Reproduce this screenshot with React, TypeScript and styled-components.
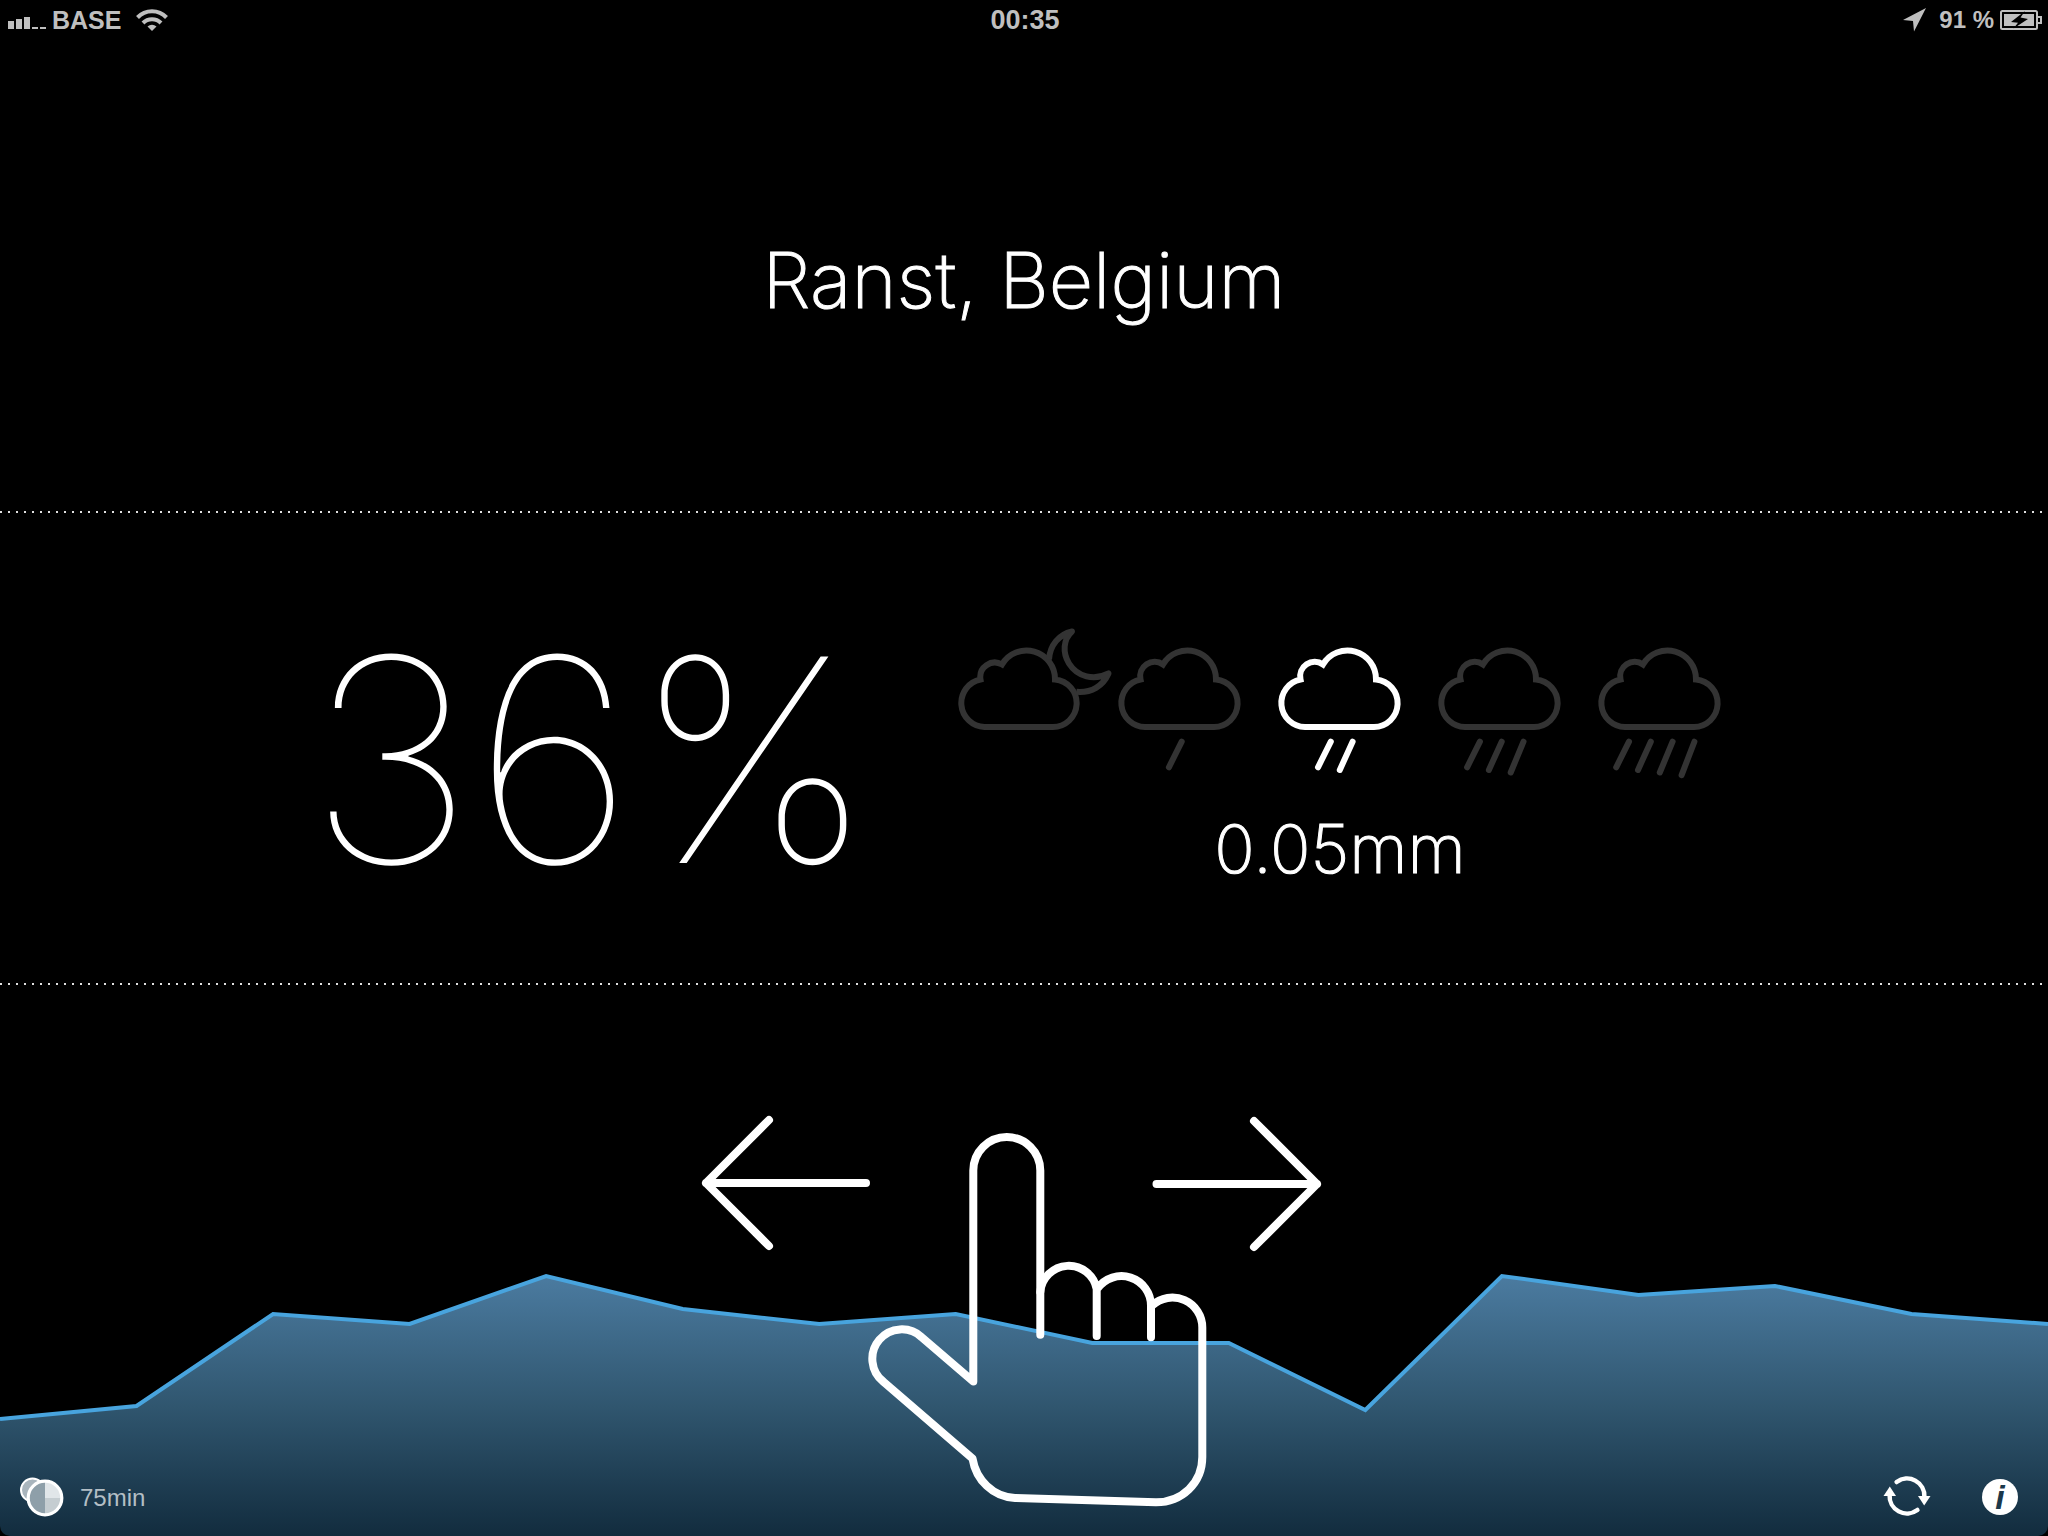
import React from "react";
import styled, { createGlobalStyle } from "styled-components";

const GlobalStyle = createGlobalStyle`
  *, *::before, *::after { box-sizing: border-box; }
  body {
    margin: 0;
    background: #000;
    color: #fff;
    font-family: "Liberation Sans", Arial, sans-serif;
  }
`;

const Screen = styled.div`
  display: grid;
  grid-template-rows: 513fr 472fr 551fr;
  min-height: 100vh;
  overflow: hidden;
  background: #000;
`;

const dotted = `
  background-image: linear-gradient(to right, #e0e0e0 2px, transparent 2px);
  background-size: 8px 2px;
  background-repeat: repeat-x;
  background-position: left bottom;
`;

const Header = styled.header`
  display: flex;
  flex-direction: column;
  ${dotted}
`;

const StatusBar = styled.div`
  display: grid;
  grid-template-columns: 1fr auto 1fr;
  align-items: center;
  height: 40px;
  padding: 0 6px 0 8px;
  color: #bfbfbf;
  font-size: 24px;
  font-weight: 700;
  line-height: 32px;
`;

const StatusGroup = styled.div<{ $end?: boolean }>`
  display: flex;
  align-items: center;
  justify-content: ${(p) => (p.$end ? "flex-end" : "flex-start")};
`;

const Carrier = styled.span`
  padding: 0 14px 0 4px;
  font-size: 25px;
`;

const Clock = styled.time`
  font-size: 27px;
`;

const BatteryLevel = styled.span`
  padding: 0 6px 0 12px;
`;

const Location = styled.h1`
  flex: 1;
  display: flex;
  align-items: center;
  justify-content: center;
  margin: 0;
  padding-top: 6px;
  font-family: Inter, "Liberation Sans", sans-serif;
  font-size: 77px;
  font-weight: 200;
  line-height: 100px;
  -webkit-text-stroke: 1px currentColor;
`;

const Forecast = styled.main`
  display: flex;
  align-items: center;
  justify-content: center;
  gap: 66px;
  ${dotted}
`;

const Chance = styled.div`
  padding-top: 22px;
  font-family: Inter, "Liberation Sans", sans-serif;
  font-size: 284px;
  font-weight: 100;
  line-height: 280px;
`;

const Rain = styled.section`
  display: flex;
  flex-direction: column;
  align-items: center;
  gap: 20px;
`;

const Levels = styled.ul`
  display: flex;
  margin: 0;
  padding: 0;
  list-style: none;
`;

const Level = styled.li<{ $active: boolean }>`
  width: 160px;
  height: 180px;
  color: ${(p) => (p.$active ? "#fff" : "#333")};
`;

const LevelIcon = styled.svg`
  display: block;
  width: 160px;
  height: 180px;
  overflow: visible;
  fill: none;
  stroke: currentColor;
  stroke-width: 6;
`;

const Amount = styled.div`
  font-family: Inter, "Liberation Sans", sans-serif;
  font-size: 67px;
  font-weight: 200;
  line-height: 80px;
  -webkit-text-stroke: 1px currentColor;
`;

const Timeline = styled.section`
  display: grid;
  grid-template: minmax(0, 1fr) / minmax(0, 1fr);
  border-radius: 0 0 10px 10px;
  overflow: hidden;

  > * { grid-area: 1 / 1; }
`;

const Chart = styled.svg`
  display: block;
  width: 100%;
  height: 100%;
  min-height: 0;
`;

const SwipeHint = styled.svg`
  place-self: end center;
  width: 648px;
  height: 424px;
  fill: none;
  stroke: #fff;
  stroke-width: 8;
  stroke-linecap: round;
  stroke-linejoin: round;
`;

const Footer = styled.footer`
  align-self: end;
  display: flex;
  align-items: center;
  justify-content: space-between;
  padding: 0 24px 15px 20px;
`;

const Range = styled.button`
  display: flex;
  align-items: center;
  gap: 16px;
  height: 48px;
  padding: 2px 0 0;
  border: 0;
  background: none;
  color: #b3bec5;
  font: 24px/32px "Liberation Sans", Arial, sans-serif;
`;

const Actions = styled.div`
  display: flex;
  gap: 45px;
`;

const IconButton = styled.button`
  display: grid;
  place-items: center;
  width: 48px;
  height: 48px;
  padding: 0;
  border: 0;
  background: none;
  color: #fff;
`;

const InfoDisc = styled.span`
  width: 36px;
  height: 36px;
  border-radius: 50%;
  background: #fff;
  color: #1b384a;
  font: italic 700 34px/36px "Liberation Sans", Arial, sans-serif;
  text-align: center;
`;

const CLOUD =
  "M45 118A24 24 0 0 1 40.5 70.5A14.5 14.5 0 0 1 63 55.5A28.5 28.5 0 0 1 116 70.5A23.8 23.8 0 0 1 114 118Z";
const CLOUD_NIGHT =
  "M44.5 118A24 24 0 0 1 40.5 70.5A14.5 14.5 0 0 1 62 55.5A28.5 28.5 0 0 1 115 70.5A23.8 23.8 0 0 1 112.5 118Z";

const LEVELS = ["Dry", "Drizzle", "Light rain", "Rain", "Heavy rain"];

function RainLevel({ drops }: { drops: number }) {
  const first = 81.7 - 10.9 * (drops - 1);
  return (
    <LevelIcon viewBox="0 0 160 180" aria-hidden="true">
      <path d={drops === 0 ? CLOUD_NIGHT : CLOUD} />
      {drops === 0 && (
        <path
          strokeLinejoin="round"
          d="M109 50.5C110 36 119 25.5 132 22.5C123 30.5 122.5 44 129 54.5C137.5 68 154 72 168.5 64.5C163 77 151.5 84 136.5 82.8"
        />
      )}
      {Array.from({ length: drops }, (_, i) => {
        const x = first + 21.8 * i;
        return (
          <line key={i} strokeLinecap="round" x1={x} y1={132.7} x2={x - 12.8} y2={158.3 + 2.6 * i} />
        );
      })}
    </LevelIcon>
  );
}

/* One sample every five minutes; distance of the curve from the panel's top. */
const SAMPLES = [434, 421, 329, 339, 291, 324, 339, 329, 358, 358, 425, 291, 310, 301, 329, 339];

function RainChart() {
  const step = 2048 / (SAMPLES.length - 1);
  const points = SAMPLES.map((y, i) => `${(i * step).toFixed(1)},${y}`).join(" ");
  return (
    <Chart viewBox="0 0 2048 551" preserveAspectRatio="none" role="img" aria-label="Rain chart">
      <defs>
        <linearGradient id="fill" gradientUnits="userSpaceOnUse" x1="0" y1="291" x2="0" y2="551">
          <stop offset="0" stopColor="#4b7ba0" />
          <stop offset="0.5" stopColor="#30566f" />
          <stop offset="1" stopColor="#122c3e" />
        </linearGradient>
      </defs>
      <polygon points={`0,551 ${points} 2048,551`} fill="url(#fill)" />
      <polyline
        points={points}
        fill="none"
        stroke="#48a4de"
        strokeWidth="4"
        vectorEffect="non-scaling-stroke"
      />
    </Chart>
  );
}

export default function App() {
  return (
    <>
      <GlobalStyle />
      <Screen>
        <Header>
          <StatusBar>
            <StatusGroup>
              <svg width="40" height="24" viewBox="0 0 40 24" fill="currentColor" aria-hidden="true">
                <path d="M0 13h6v8H0zM8 11h6v10H8zM16 9h6v12h-6zM24 19h6v2h-6zM32 19h6v2h-6z" />
              </svg>
              <Carrier>BASE</Carrier>
              <svg width="34" height="24" viewBox="0 0 34 24" fill="none" stroke="currentColor" aria-hidden="true">
                <path d="M2.5 9.5A20 20 0 0 1 31.5 9.5" strokeWidth="4" />
                <path d="M8 15A12.5 12.5 0 0 1 26 15" strokeWidth="4" />
                <path d="M12.5 18.5A7 7 0 0 1 21.5 18.5L17 23Z" fill="currentColor" stroke="none" />
              </svg>
            </StatusGroup>
            <Clock>00:35</Clock>
            <StatusGroup $end>
              <svg width="24" height="24" viewBox="0 0 24 24" fill="currentColor" aria-hidden="true">
                <path d="M23 0L0 12L10 13L11 23.5Z" />
              </svg>
              <BatteryLevel>91 %</BatteryLevel>
              <svg width="42" height="24" viewBox="0 0 42 24" fill="currentColor" aria-hidden="true">
                <rect x="1" y="3" width="36" height="18" rx="1.5" fill="none" stroke="currentColor" strokeWidth="2" />
                <path d="M38 8h4v8h-4v-2h2v-4h-2z" />
                <rect x="4" y="6" width="30" height="12" />
                <path d="M25 3L11 14L18 14.7L13.5 20.5L28 11L20.5 9.5Z" fill="#000" />
              </svg>
            </StatusGroup>
          </StatusBar>
          <Location>Ranst, Belgium</Location>
        </Header>

        <Forecast>
          <Chance>36%</Chance>
          <Rain>
            <Levels>
              {LEVELS.map((name, drops) => (
                <Level key={name} $active={drops === 2} aria-label={name}>
                  <RainLevel drops={drops} />
                </Level>
              ))}
            </Levels>
            <Amount>0.05mm</Amount>
          </Rain>
        </Forecast>

        <Timeline>
          <RainChart />
          <SwipeHint viewBox="0 0 648 424" aria-hidden="true">
            <path d="M69 8L6 71L69 134M6 71H166" />
            <path d="M554 9L617 72L554 135M617 72H456.5" />
            <path d="M340.3 222.7V58.5A33.5 33.5 0 0 0 273.3 58.5V269.5L221.7 225.2A29.4 29.4 0 1 0 183.7 270L272.5 346.5C276 368 293 385 315 386L456 390.3C482 390 502.3 371 502.3 345V216A30 30 0 0 0 452 193.5" />
            <path d="M340.3 180A28.5 28.5 0 0 1 396.7 177V224M397.5 176.5A29.5 29.5 0 0 1 451 194V225.3" />
          </SwipeHint>
          <Footer>
            <Range type="button">
              <svg width="44" height="44" viewBox="0 0 44 44" aria-hidden="true">
                <circle cx="12.5" cy="14" r="11.5" fill="#a9b5bd" stroke="#fff" strokeWidth="2" />
                <circle cx="25" cy="22" r="16" fill="#8e9fa9" />
                <path d="M25 22V6A16 16 0 0 1 41 22Z" fill="#e1e6e9" />
                <path d="M25 22H41A16 16 0 0 1 25 38Z" fill="#c5cdd1" />
                <circle cx="25" cy="22" r="16.8" fill="none" stroke="#fff" strokeWidth="3.2" />
              </svg>
              75min
            </Range>
            <Actions>
              <IconButton type="button" aria-label="Refresh">
                <svg width="48" height="48" viewBox="-24 -23 48 48" fill="currentColor" aria-hidden="true">
                  <g id="turn">
                    <path d="M-10.4 -14A17.4 17.4 0 0 1 17.4 1" fill="none" stroke="currentColor" strokeWidth="4.5" strokeLinecap="round" />
                    <path d="M11 0H23.5L17.2 9.5Z" />
                  </g>
                  <use href="#turn" transform="rotate(180)" />
                </svg>
              </IconButton>
              <IconButton type="button" aria-label="Info">
                <InfoDisc>i</InfoDisc>
              </IconButton>
            </Actions>
          </Footer>
        </Timeline>
      </Screen>
    </>
  );
}
